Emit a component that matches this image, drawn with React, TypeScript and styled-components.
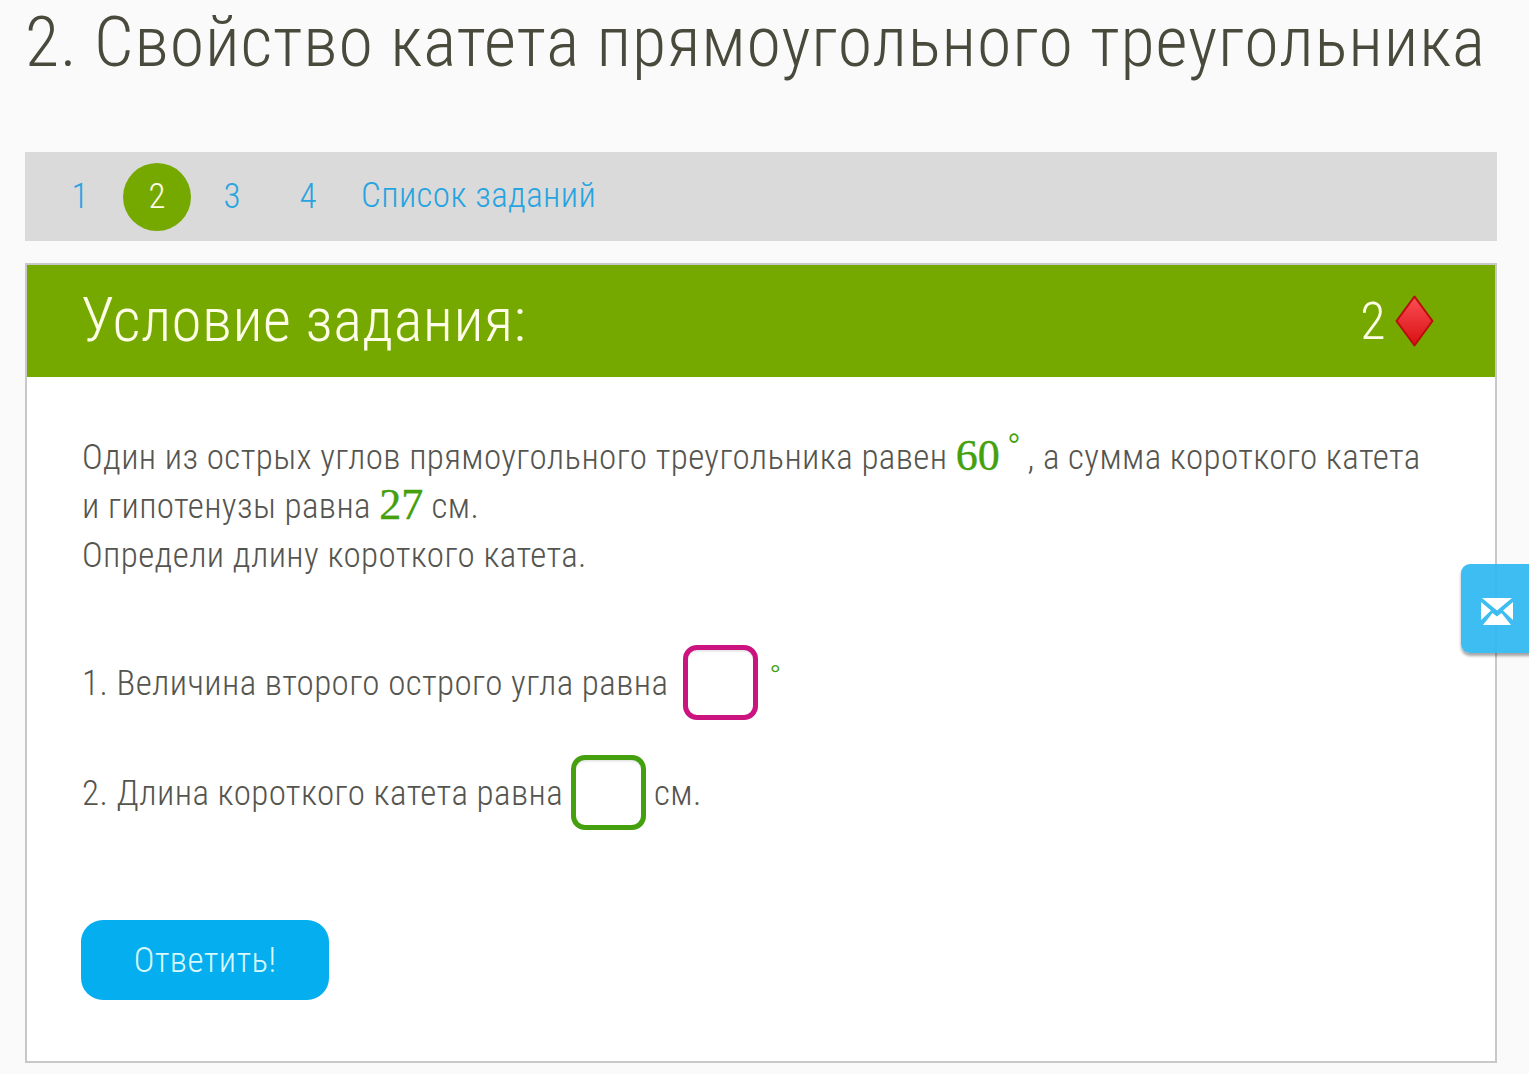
import styled, { createGlobalStyle } from "styled-components"

const GlobalStyle = createGlobalStyle`
  html, body {
    margin: 0;
    padding: 0;
    background: #fafafa;
    overflow: hidden;
  }
  body {
    font-family: "Roboto", "Liberation Sans", sans-serif;
    font-weight: 300;
    font-stretch: 75%;
    color: #4a4a44;
  }
`

const Page = styled.div`
  width: 1529px;
  height: 1074px;
  box-sizing: border-box;
  padding: 0 32px 0 25px;
  position: relative;
  overflow: hidden;
`

const Title = styled.h1`
  margin: 0;
  height: 152px;
  padding: 2px 0 0 0;
  box-sizing: border-box;
  font-size: 70px;
  line-height: 80px;
  font-weight: 300;
  letter-spacing: 0.85px;
  white-space: nowrap;
  color: #4a4a3c;
`

const Nav = styled.nav`
  height: 89px;
  background: #dadada;
  display: flex;
  align-items: center;
  padding: 0 0 0 21px;
  margin-bottom: 22px;
  font-size: 35px;
`

const NavItem = styled.a<{ $active?: boolean }>`
  width: 68px;
  height: 68px;
  margin: ${p => (p.$active ? "0 7px 0 1px" : "-1px 8px 0 0")};
  border-radius: 50%;
  display: flex;
  align-items: center;
  justify-content: center;
  color: ${p => (p.$active ? "#fdfde8" : "#27a4e0")};
  background: ${p => (p.$active ? "#76a900" : "transparent")};
`

const NavLink = styled.a`
  color: #27a4e0;
  margin: -3px 0 0 11px;
  letter-spacing: 0.4px;
`

const Card = styled.section`
  height: 800px;
  box-sizing: border-box;
  border: 2px solid #c8c8c8;
  background: #ffffff;
`

const CardHead = styled.header`
  height: 112px;
  background: #76a900;
  color: #fdfde8;
  display: flex;
  align-items: center;
  justify-content: space-between;
  padding: 0 61px 0 54px;
  font-size: 61px;
  letter-spacing: 0.45px;
`

const HeadTitle = styled.span`
  margin-top: -3px;
`

const Points = styled.div`
  display: flex;
  align-items: center;
  gap: 9px;
  font-size: 52px;
`

const CardBody = styled.div`
  padding: 56px 55px 0;
  font-size: 35px;
  line-height: 49px;
  letter-spacing: 0.4px;
  color: #55554f;
`

const Statement = styled.p`
  margin: 0 0 65px;
  white-space: nowrap;
`

const Num = styled.span`
  font-family: "Liberation Serif", serif;
  font-weight: 400;
  font-size: 44px;
  font-stretch: 100%;
  letter-spacing: 0;
  color: #44a00e;
  line-height: 40px;
  vertical-align: -1px;
  -webkit-text-stroke: 0.4px #44a00e;
`

const Deg = styled.sup`
  font-size: 38px;
  line-height: 0;
  color: #44a00e;
  vertical-align: 7px;
  margin: 0 6px 0 7px;
`

const Question = styled.div`
  display: flex;
  align-items: center;
  height: 75px;
  margin-bottom: 35px;
  white-space: nowrap;
`

const QuestionText = styled.span`
  padding-top: 2px;
`

const AnswerBox = styled.span<{ $color: string; $gap: number }>`
  width: 75px;
  height: 75px;
  box-sizing: border-box;
  border: 5px solid ${p => p.$color};
  border-radius: 14px;
  margin: 0 8px 0 ${p => p.$gap}px;
  background: #fff;
  box-shadow: inset 0 3px 3px -2px #d8d8d8;
`

const SmallDeg = styled.span`
  font-size: 32px;
  line-height: 1;
  color: #44a00e;
  margin: -14px 0 0 3px;
`

const Submit = styled.button`
  display: block;
  margin: 90px 0 0 -1px;
  width: 248px;
  height: 80px;
  border: 0;
  border-radius: 22px;
  background: #04aeef;
  color: #d8f8fc;
  font: inherit;
  font-stretch: 75%;
  font-size: 35px;
  letter-spacing: 0.4px;
  padding: 0;
`

const Feedback = styled.div`
  position: absolute;
  left: 1461px;
  top: 564px;
  width: 80px;
  height: 89px;
  border-radius: 9px 0 0 9px;
  background: rgba(46, 184, 240, 0.93);
  box-shadow: 0 3px 3px rgba(0, 0, 0, 0.35);
  display: flex;
  align-items: center;
  padding: 7px 0 0 20px;
  box-sizing: border-box;
`

const App = () => {
  return (
    <Page>
      <GlobalStyle />
      <Title>2. Свойство катета прямоугольного треугольника</Title>
      <Nav>
        <NavItem>1</NavItem>
        <NavItem $active>2</NavItem>
        <NavItem>3</NavItem>
        <NavItem>4</NavItem>
        <NavLink>Список заданий</NavLink>
      </Nav>
      <Card>
        <CardHead>
          <HeadTitle>Условие задания:</HeadTitle>
          <Points>
            2
            <svg width="39" height="52" viewBox="0 0 39 52">
              <defs>
                <linearGradient id="gem" x1="0" y1="0" x2="0" y2="1">
                  <stop offset="0" stopColor="#fb4f55" />
                  <stop offset="1" stopColor="#d81012" />
                </linearGradient>
              </defs>
              <path d="M19.5 1.5 L37.5 26 L19.5 50.5 L1.5 26 Z" fill="url(#gem)" stroke="#b80d0b" strokeWidth="2" strokeLinejoin="round" />
            </svg>
          </Points>
        </CardHead>
        <CardBody>
          <Statement>
            Один из острых углов прямоугольного треугольника равен <Num>60</Num>
            <Deg>°</Deg>, а сумма короткого катета
            <br />
            и гипотенузы равна <Num>27</Num> см.
            <br />
            Определи длину короткого катета.
          </Statement>
          <Question>
            <QuestionText>1. Величина второго острого угла равна</QuestionText>
            <AnswerBox $color="#cb1480" $gap={15} />
            <SmallDeg>°</SmallDeg>
          </Question>
          <Question>
            <QuestionText>2. Длина короткого катета равна</QuestionText>
            <AnswerBox $color="#44a00e" $gap={8} />
            <QuestionText>см.</QuestionText>
          </Question>
          <Submit>Ответить!</Submit>
        </CardBody>
      </Card>
      <Feedback>
        <svg width="32" height="28" viewBox="0 0 32 28">
          <path d="M1 0 H31 L16 12.5 Z" fill="#fff" />
          <path d="M0 4 L10 12.5 L0 22 Z M32 4 L22 12.5 L32 22 Z" fill="#fff" />
          <path d="M2 27 L11.5 15 L16 18.5 L20.5 15 L30 27 Z" fill="#fff" />
        </svg>
      </Feedback>
    </Page>
  )
}

export default App
